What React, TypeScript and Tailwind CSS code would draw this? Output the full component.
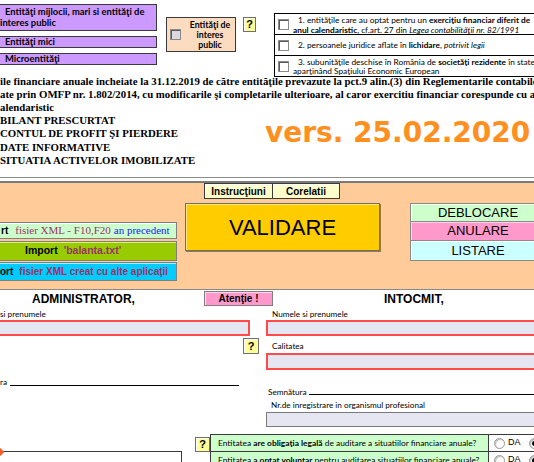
import React from "react";

function Q({ className = "" }: { className?: string }) {
  return (
    <div
      className={
        "flex items-center justify-center bg-[#ffff99] border border-[#6f6f6f] shadow-[inset_1px_1px_0_#ffffff] font-bold text-[11px] leading-none font-['Liberation_Sans',sans-serif] shrink-0 " +
        className
      }
    >
      ?
    </div>
  );
}

function Check({ grey = false }: { grey?: boolean }) {
  return (
    <div
      className={
        (grey ? "bg-[#dcd8e0] " : "bg-white ") +
        "w-[11px] h-[11px] shrink-0 border border-[#8a8a8a] shadow-[inset_1px_1px_0_#5a5a5a]"
      }
    />
  );
}

function Radio({ on = false }: { on?: boolean }) {
  return (
    <div className="w-[11px] h-[11px] shrink-0 rounded-full bg-white border border-[#9a9a9a] shadow-[inset_1px_1px_1px_#bbbbbb] flex items-center justify-center">
      {on ? <div className="w-[5px] h-[5px] rounded-full bg-black" /> : null}
    </div>
  );
}

export default function App() {
  return (
    <div className="w-[534px] h-[462px] overflow-hidden bg-white text-black font-['Lato',sans-serif]">
      {/* TOP */}
      <div className="flex h-[76px]">
        <div className="w-[157px] shrink-0 flex flex-col pt-[4px] gap-[5px] font-bold text-[9.4px] whitespace-nowrap">
          <div className="h-[27px] -ml-[2px] bg-[#cc99ff] border border-[#3a3a3a] leading-[10.5px] pl-[6px] pt-[2px] overflow-hidden">
            Entităţi mijlocii, mari si entităţi de
            <br />
            <span className="-ml-[5px]">interes public</span>
          </div>
          <div className="h-[12px] -ml-[2px] bg-[#cc99ff] border border-[#3a3a3a] leading-[10px] pl-[6px]">
            Entităţi mici
          </div>
          <div className="h-[12px] -ml-[2px] bg-[#cc99ff] border border-[#3a3a3a] leading-[10px] pl-[6px]">
            Microentităţi
          </div>
        </div>

        <div className="ml-[9px] mt-[17px] w-[70px] h-[35px] shrink-0 bg-[#fcdcc0] border border-[#3a3a3a] flex items-center pl-[3px]">
          <Check grey />
          <div className="flex-1 text-center font-bold text-[8.8px] leading-[10px] pl-[4px]">
            Entităţi de
            <br />
            interes
            <br />
            public
          </div>
        </div>

        <Q className="ml-[7px] mt-[17px] w-[13px] h-[15px]" />

        <div className="ml-[18px] mt-[13px] w-[320px] shrink-0 self-start border-t border-l border-black text-[8.3px] whitespace-nowrap">
          <div className="h-[21px] border-b border-black flex items-center pl-[3px] gap-[4px]">
            <Check />
            <div className="leading-[10px] pt-[1px]">
              <div className="pl-[5px]">
                1. entităţile care au optat pentru un <b>exerciţiu financiar diferit de</b>
              </div>
              <div>
                <b>anul calendaristic</b>, cf.art. 27 din <i>Legea contabilităţii nr. 82/1991</i>
              </div>
            </div>
          </div>
          <div className="h-[21px] border-b border-black flex items-center pl-[3px] gap-[4px]">
            <Check />
            <div className="pl-[5px] leading-[10px]">
              2. persoanele juridice aflate în <b>lichidare</b>, <i>potrivit legii</i>
            </div>
          </div>
          <div className="h-[21px] border-b border-black flex items-center pl-[3px] gap-[4px]">
            <Check />
            <div className="leading-[9px] pt-[1px]">
              <div className="pl-[5px]">
                3. subunităţile deschise în România de <b>societăţi rezidente</b> în state
              </div>
              <div>aparţinând Spaţiului Economic European</div>
            </div>
          </div>
        </div>
      </div>

      {/* HEADING TEXT */}
      <div className="h-[101px] overflow-hidden">
        <div className="-mt-[1.5px] font-['Liberation_Serif',serif] font-bold text-[10.8px] leading-[13.2px] whitespace-nowrap">
          <div>
            ile financiare anuale incheiate la 31.12.2019 de către entităţile prevazute la pct.9 alin.(3) din Reglementarile contabile
          </div>
          <div>
            ate prin OMFP nr. 1.802/2014, cu modificarile şi completarile ulterioare, al caror exercitiu financiar corespunde cu anul
          </div>
          <div>alendaristic</div>
          <div className="flex">
            <div className="w-[265px] shrink-0">
              <div>BILANT PRESCURTAT</div>
              <div>CONTUL DE PROFIT ŞI PIERDERE</div>
              <div>DATE INFORMATIVE</div>
              <div>SITUATIA ACTIVELOR IMOBILIZATE</div>
            </div>
            <div className="mt-[5px] font-['DejaVu_Sans',sans-serif] font-bold text-[28px] leading-[28px] text-[#ff8f1f]">
              vers. 25.02.2020
            </div>
          </div>
        </div>
      </div>

      {/* separator lines */}
      <div className="h-px bg-[#8c8c8c]" />
      <div className="h-[3px]" />
      <div className="h-[2px] bg-[#7a7a7a]" />

      {/* PEACH PANEL */}
      <div className="h-[107px] bg-[#ffcc99] border-b border-[#8a8a8a] flex">
        <div className="w-[177px] shrink-0 pt-[39px] flex flex-col whitespace-nowrap">
          <div className="h-[17px] -ml-[2px] bg-[#ccffcc] border border-[#7f7f7f] shadow-[inset_1px_1px_0_#ffffff] flex items-center">
            <span className="font-['Liberation_Sans',sans-serif] font-bold text-[10px] ml-[2px]">rt</span>
            <span className="font-['Liberation_Serif',serif] text-[11px] text-[#993366] ml-[7px]">fisier XML - F10,F20</span>
            <span className="font-['Liberation_Serif',serif] text-[11px] text-[#2020ff] ml-[3px]">an precedent</span>
          </div>
          <div className="h-[20px] mt-[2px] -ml-[2px] bg-[#99cc00] border border-[#7f7f7f] shadow-[inset_1px_1px_0_#d8f08a] flex items-center font-['Liberation_Sans',sans-serif] font-bold text-[10.5px]">
            <span className="ml-[26px]">Import</span>
            <span className="ml-[6px] text-[#993366]">'balanta.txt'</span>
          </div>
          <div className="h-[19px] mt-[1px] -ml-[2px] bg-[#00ccff] border border-[#7f7f7f] shadow-[inset_1px_1px_0_#99eeff] flex items-center font-['Liberation_Sans',sans-serif] font-bold text-[10px]">
            <span className="ml-[1px]">ort</span>
            <span className="ml-[6px] text-[#993366]">fisier XML creat cu alte aplicaţii</span>
          </div>
        </div>

        <div className="ml-[8px] w-[195px] shrink-0 flex flex-col">
          <div className="flex pl-[19px] font-['Liberation_Sans',sans-serif] font-bold text-[10px]">
            <div className="w-[69px] h-[16px] bg-[#ffffcc] border border-[#3a3a3a] shadow-[inset_1px_1px_0_#ffffff] flex items-center justify-center">
              Instrucţiuni
            </div>
            <div className="w-[68px] h-[16px] -ml-px bg-[#ffffcc] border border-[#3a3a3a] shadow-[inset_1px_1px_0_#ffffff] flex items-center justify-center">
              Corelatii
            </div>
          </div>
          <div className="mt-[4px] h-[48px] bg-[#ffcc00] border border-[#6f6f6f] shadow-[inset_1px_1px_0_#ffe680,1px_1px_0_#9a7a40] flex items-center justify-center font-['Liberation_Sans',sans-serif] text-[22px]">
            VALIDARE
          </div>
        </div>

        <div className="ml-[30px] pt-[20px] w-[136px] shrink-0 flex flex-col font-['Liberation_Sans',sans-serif] text-[13px]">
          <div className="h-[19px] bg-[#ccffcc] border border-[#8a8a8a] shadow-[inset_1px_1px_0_#ffffff] flex items-center justify-center">
            DEBLOCARE
          </div>
          <div className="h-[19px] bg-[#ff99cc] border border-[#8a8a8a] border-t-0 shadow-[inset_1px_1px_0_#ffd0e8] flex items-center justify-center">
            ANULARE
          </div>
          <div className="h-[20px] bg-[#ccffff] border border-[#8a8a8a] border-t-0 shadow-[inset_1px_1px_0_#ffffff] flex items-center justify-center">
            LISTARE
          </div>
        </div>
      </div>

      {/* SIGNATURE HEADERS */}
      <div className="h-[18px] flex font-['Liberation_Sans',sans-serif] font-bold">
        <div className="w-[204px] shrink-0 pl-[32px] text-[12px] leading-[18px]">ADMINISTRATOR,</div>
        <div className="w-[69px] h-[15px] mt-[1px] shrink-0 bg-[#ff99cc] border border-[#7f7f7f] shadow-[inset_1px_1px_0_#ffd6ea] flex items-center justify-center text-[10px]">
          Atenţie !
        </div>
        <div className="ml-[111px] text-[12px] leading-[18px]">INTOCMIT,</div>
      </div>

      {/* TWO COLUMNS */}
      <div className="h-[126px] flex text-[8.2px] whitespace-nowrap">
        <div className="w-[266px] shrink-0 flex flex-col">
          <div className="mt-[2px] leading-[9px]">si prenumele</div>
          <div className="mt-[1px] h-[16px] w-[253px] -ml-[3px] bg-[#e6e6f2] border-2 border-[#ff4a4a]" />
          <Q className="mt-[2px] ml-[243px] w-[16px] h-[16px]" />
          <div className="mt-[24px] h-[9px] flex items-end">
            <span className="leading-[9px]">ra</span>
            <div className="ml-[3px] w-[229px] border-b border-black mb-[1px]" />
          </div>
        </div>
        <div className="flex-1 flex flex-col">
          <div className="mt-[2px] leading-[9px] pl-[6px]">Numele si prenumele</div>
          <div className="mt-[1px] h-[16px] w-[280px] bg-[#e6e6f2] border-2 border-[#ff4a4a]" />
          <div className="mt-[6px] leading-[9px] pl-[6px]">Calitatea</div>
          <div className="mt-[2px] h-[17px] w-[280px] bg-[#e6e6f2] border-2 border-[#ff4a4a]" />
          <div className="mt-[17px] h-[10px] flex items-end pl-[2px]">
            <span className="leading-[10px]">Semnătura</span>
            <div className="ml-[2px] flex-1 border-b border-black mb-[2px]" />
          </div>
          <div className="mt-[4px] leading-[9px] pl-[5px]">Nr.de inregistrare in organismul profesional</div>
          <div className="mt-[2px] h-[15px] w-[280px] bg-[#e6e6f2] border border-[#7a7a7a]" />
        </div>
      </div>

      {/* AUDIT ROWS */}
      <div className="flex text-[8.4px] whitespace-nowrap">
        <div className="w-[195px] shrink-0 pt-[17px]">
          <div className="relative -ml-px w-[183px] h-[20px] border border-[#3a3a3a]">
            <div className="absolute -left-[3px] -top-[3px] w-[6px] h-[6px] rotate-45 bg-[#ff5a2a]" />
          </div>
        </div>
        <Q className="mt-[3px] w-[15px] h-[15px]" />
        <div className="w-[330px] shrink-0 flex flex-col">
          <div className="h-[18px] flex border border-[#3a3a3a] bg-[#ccffcc]">
            <div className="w-[278px] shrink-0 border-r border-[#3a3a3a] pl-[7px] flex items-center">
              Entitatea&nbsp;<b>are obligaţia legală</b>&nbsp;de auditare a situatiilor financiare anuale?
            </div>
            <div className="flex items-center bg-white pl-[5px] font-['Liberation_Sans',sans-serif] text-[9px]">
              <Radio />
              <span className="ml-[3px]">DA</span>
              <div className="ml-[8px]">
                <Radio on />
              </div>
            </div>
          </div>
          <div className="h-[18px] -mt-px flex border border-[#3a3a3a] bg-[#ccffcc]">
            <div className="w-[278px] shrink-0 border-r border-[#3a3a3a] pl-[7px] flex items-center">
              Entitatea&nbsp;<b>a optat voluntar</b>&nbsp;pentru auditarea situatiilor financiare anuale?
            </div>
            <div className="flex items-center bg-white pl-[5px] font-['Liberation_Sans',sans-serif] text-[9px]">
              <Radio />
              <span className="ml-[3px]">DA</span>
              <div className="ml-[8px]">
                <Radio on />
              </div>
            </div>
          </div>
        </div>
      </div>
    </div>
  );
}
